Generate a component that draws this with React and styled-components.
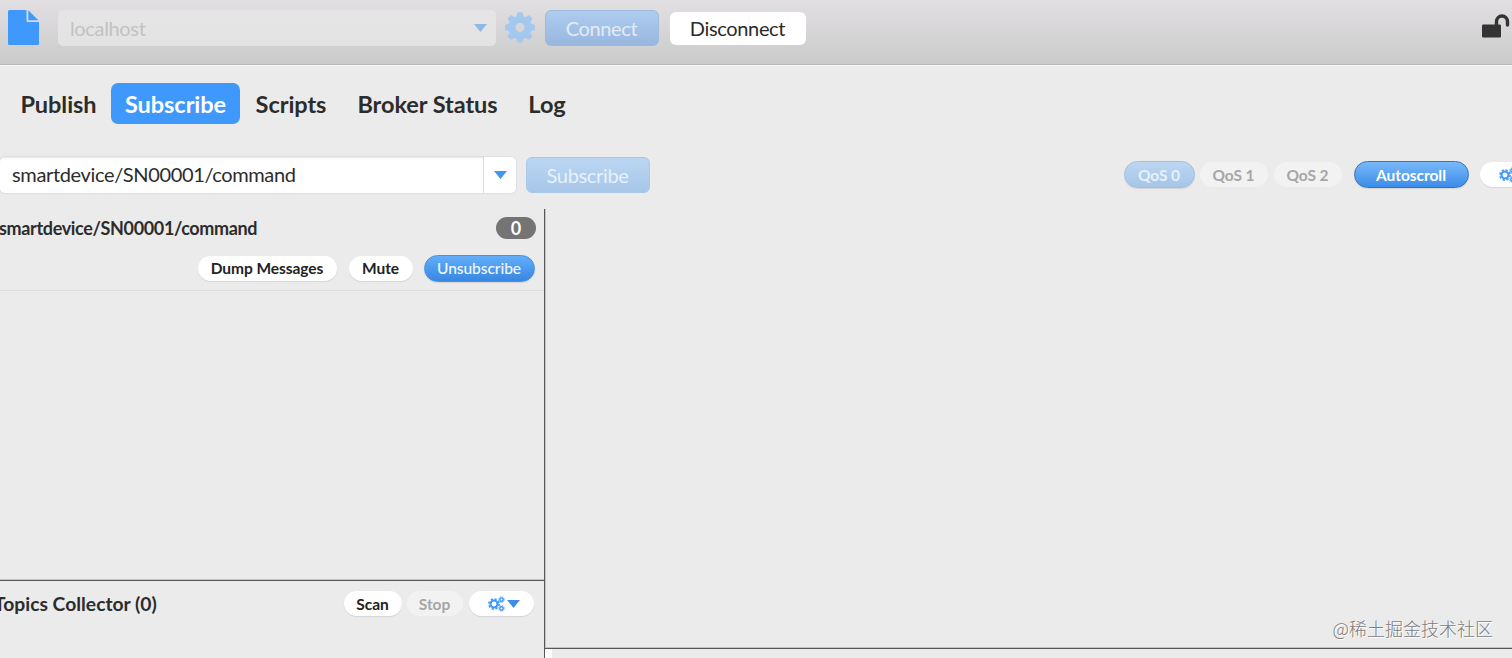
import styled, { createGlobalStyle, css } from "styled-components";

export default function App() {
  return (
    <Window>
      <GlobalStyle />
      <TopBar>
        <FileIcon />
        <BrokerSelect>
          <span>localhost</span>
          <Caret width={13} height={8} color="#8fb9e0" />
        </BrokerSelect>
        <CogIcon />
        <ConnectButton>Connect</ConnectButton>
        <DisconnectButton>Disconnect</DisconnectButton>
        <UnlockIcon />
      </TopBar>

      <Tabs>
        <Tab $width={105}>Publish</Tab>
        <Tab $width={129} $active>
          Subscribe
        </Tab>
        <Tab $width={102}>Scripts</Tab>
        <Tab $width={171}>Broker Status</Tab>
        <Tab $width={68}>Log</Tab>
      </Tabs>

      <SubscribeBar>
        <TopicBox>
          <TopicInput>smartdevice/SN00001/command</TopicInput>
          <TopicToggle>
            <Caret width={13} height={8} color="#3f97f2" />
          </TopicToggle>
        </TopicBox>
        <SubscribeButton>Subscribe</SubscribeButton>
        <Options>
          <Pill $width={71} $variant="fadedBlue">
            QoS 0
          </Pill>
          <Pill $width={68} $variant="disabled" $left={5}>
            QoS 1
          </Pill>
          <Pill $width={68} $variant="disabled" $left={6}>
            QoS 2
          </Pill>
          <Pill $width={115} $variant="toggled" $left={12}>
            Autoscroll
          </Pill>
          <Pill $width={65} $left={11} $menu>
            <CogsIcon />
            <Caret width={13} height={8} color="#3f8ee6" />
          </Pill>
        </Options>
      </SubscribeBar>

      <Panels>
        <Sidebar>
          <Subscriptions>
            <Subscription>
              <TopicRow>
                <TopicName>smartdevice/SN00001/command</TopicName>
                <Badge>0</Badge>
              </TopicRow>
              <ActionRow>
                <Pill $width={139}>Dump Messages</Pill>
                <Pill $width={64} $left={12}>
                  Mute
                </Pill>
                <Pill $width={111} $left={11} $variant="blue">
                  Unsubscribe
                </Pill>
              </ActionRow>
            </Subscription>
          </Subscriptions>
          <Collector>
            <CollectorTitle>Topics Collector (0)</CollectorTitle>
            <Pill $width={58}>Scan</Pill>
            <Pill $width={56} $left={5} $variant="disabled">
              Stop
            </Pill>
            <Pill $width={65} $left={6} $menu>
              <CogsIcon />
              <Caret width={13} height={8} color="#3f8ee6" />
            </Pill>
          </Collector>
        </Sidebar>
        <Messages>
          <MessageList>
            <Watermark>@稀土掘金技术社区</Watermark>
          </MessageList>
          <MessageDetail>
            <DetailGutter />
          </MessageDetail>
        </Messages>
      </Panels>
    </Window>
  );
}

function FileIcon() {
  return (
    <FileSvg width="31" height="35" viewBox="0 0 31 35">
      <path
        fill="#3f99fc"
        d="M1.500 0H18.500V10.500Q18.500 12 20 12H31V33.500Q31 35 29.500 35H1.500Q0 35 0 33.500V1.500Q0 0 1.500 0Z"
      />
      <path fill="#3f99fc" d="M20.300 0.300L30.300 10.300H20.300Z" />
    </FileSvg>
  );
}

// eight square teeth around a ring
function CogIcon() {
  return (
    <CogSvg width="30" height="31" viewBox="-15 -15.500 30 31">
      <circle r="8" fill="none" stroke="#a4c8ee" strokeWidth="7" />
      {[0, 45, 90, 135, 180, 225, 270, 315].map((angle) => (
        <path
          key={angle}
          d="M-3.900 -10L-2.600 -14.600Q-2.400 -15.200 -1.800 -15.200H1.800Q2.400 -15.200 2.600 -14.600L3.900 -10Z"
          transform={`rotate(${angle})`}
          fill="#a4c8ee"
        />
      ))}
    </CogSvg>
  );
}

function CogsIcon() {
  return (
    <svg width="17" height="16" viewBox="0 0 17 16" fill="none" stroke="#3f99f8">
      <circle cx="6" cy="8" r="3.500" strokeWidth="2.100" />
      <circle cx="6" cy="8" r="5.100" strokeWidth="1.600" strokeDasharray="2.200 1.805" />
      <circle cx="13.500" cy="3.600" r="1.700" strokeWidth="1.400" />
      <circle cx="13.500" cy="3.600" r="2.700" strokeWidth="1" strokeDasharray="1.200 0.920" />
      <circle cx="13.500" cy="12.400" r="1.700" strokeWidth="1.400" />
      <circle cx="13.500" cy="12.400" r="2.700" strokeWidth="1" strokeDasharray="1.200 0.920" />
    </svg>
  );
}

function UnlockIcon() {
  return (
    <UnlockSvg width="28" height="24" viewBox="0 0 28 24">
      <rect x="0" y="10.500" width="19" height="13" rx="1.300" fill="#333" />
      <path
        d="M14.500 11V7.500a5.500 5.500 0 0 1 11 0V11"
        fill="none"
        stroke="#333"
        strokeWidth="3.400"
        strokeLinecap="round"
      />
    </UnlockSvg>
  );
}

function Caret({ width, height, color }) {
  return (
    <svg width={width} height={height} viewBox="0 0 12 8" preserveAspectRatio="none">
      <path d="M0 0H12L6 8Z" fill={color} />
    </svg>
  );
}

const GlobalStyle = createGlobalStyle`
  * {
    box-sizing: border-box;
  }

  body {
    margin: 0;
    overflow: hidden;
    background: #ebebeb;
    color: #2c2c2c;
    font-family: Lato, "Noto Sans CJK SC", sans-serif;
  }
`;

const Window = styled.div`
  display: flex;
  flex-direction: column;
  width: 1512px;
  height: 658px;
  overflow: hidden;
  white-space: nowrap;
`;

const TopBar = styled.header`
  display: flex;
  align-items: flex-start;
  flex: none;
  height: 65px;
  padding: 10px 2px 0 8px;
  background: linear-gradient(#e2dfe2, #cbcbcb);
  border-bottom: 1px solid #b8b8b8;
`;

const FileSvg = styled.svg`
  flex: none;
`;

const CogSvg = styled.svg`
  flex: none;
  margin: 2px 10px 0 9px;
`;

const UnlockSvg = styled.svg`
  flex: none;
  margin: 4px 0 0 auto;
`;

const BrokerSelect = styled.div`
  display: flex;
  align-items: center;
  justify-content: space-between;
  width: 438px;
  height: 36px;
  margin-left: 19px;
  padding: 0 9px 0 12px;
  border-radius: 5px;
  background: linear-gradient(#e6e5e6, #e3e3e3);
  color: #c2c2c2;
  font-size: 20px;
  letter-spacing: -0.35px;
`;

const LargeButton = styled.button`
  flex: none;
  height: 36px;
  padding: 0 1px 1px 0;
  border: 0;
  border-radius: 6px;
  font-family: inherit;
  font-size: 20px;
  letter-spacing: -0.35px;
`;

const ConnectButton = styled(LargeButton)`
  width: 114px;
  border: 1px solid #9dbbdf;
  background: linear-gradient(#adccee, #98b7df);
  color: #e3ebf5;
`;

const DisconnectButton = styled(LargeButton)`
  width: 136px;
  height: 33px;
  margin: 2px 0 0 11px;
  padding-bottom: 2px;
  background: #fff;
  color: #2a2a2a;
`;

const Tabs = styled.nav`
  display: flex;
  flex: none;
  height: 76px;
  padding: 17px 0 0 6px;
  border-top: 1px solid #f6f6f6;
`;

const Tab = styled.div`
  display: flex;
  align-items: center;
  justify-content: center;
  width: ${({ $width }) => $width}px;
  height: 41px;
  border-radius: 7px;
  font-size: 23.500px;
  font-weight: 700;
  letter-spacing: -0.05px;
  ${({ $active }) =>
    $active &&
    css`
      background: #3f99fc;
      color: #fff;
    `}
`;

const SubscribeBar = styled.section`
  display: flex;
  align-items: flex-start;
  flex: none;
  height: 68px;
  padding-top: 16px;
`;

const TopicBox = styled.div`
  display: flex;
  flex: none;
  width: 516px;
  height: 36px;
  border-radius: 5px;
  background: #fff;
  box-shadow: 0 0 1px 1px #dedede;
`;

const TopicInput = styled.div`
  flex: 1;
  padding-left: 12px;
  line-height: 35px;
  font-size: 20px;
  letter-spacing: -0.36px;
  box-shadow: inset 0 2px 2px -1px #e5e5e5;
`;

const TopicToggle = styled.div`
  display: flex;
  align-items: center;
  justify-content: center;
  width: 33px;
  border-left: 1px solid #dcdcdc;
`;

const SubscribeButton = styled(LargeButton)`
  width: 124px;
  margin-left: 10px;
  border: 1px solid #a9c9e8;
  background: linear-gradient(#bbd6f3, #a7c7e9);
  color: #e9f1fa;
`;

const Options = styled.div`
  display: flex;
  align-items: center;
  flex: none;
  height: 35px;
  margin-left: 474px;
`;

const pillVariants = {
  blue: css`
    height: 27px;
    border: 1px solid #4790e2;
    background: linear-gradient(#63aefa, #3787e2);
    color: #f3f8ff;
    font-weight: 500;
  `,
  toggled: css`
    height: 27px;
    border: 1px solid #3773b8;
    background: linear-gradient(#7ab9f9, #3b8ce8);
    color: #fff;
  `,
  fadedBlue: css`
    height: 27px;
    border: 1px solid #9fbfdf;
    background: linear-gradient(#bcd6f1, #a5c6e9);
    color: #e8f0fa;
  `,
  disabled: css`
    height: 25px;
    background: #f2f2f2;
    box-shadow: none;
    color: #a6a6a6;
  `,
};

const Pill = styled.button`
  display: flex;
  align-items: center;
  justify-content: center;
  flex: none;
  gap: 2px;
  width: ${({ $width }) => $width}px;
  height: 25px;
  margin-left: ${({ $left = 0 }) => $left}px;
  padding: ${({ $menu }) => ($menu ? "0 0 0 5px" : "0 1px 0 0")};
  border: 0;
  border-radius: 14px;
  background: #fff;
  box-shadow: 0 1px 1px #d4d4d4;
  color: #222;
  font-family: inherit;
  font-size: 15.500px;
  font-weight: 700;
  letter-spacing: -0.05px;
  ${({ $variant }) => pillVariants[$variant]}
`;

const Panels = styled.main`
  display: flex;
  flex: 1;
  min-height: 0;
`;

const Sidebar = styled.aside`
  display: flex;
  flex-direction: column;
  width: 544px;
`;

const Subscriptions = styled.div`
  flex: 1;
`;

const Subscription = styled.div`
  height: 82px;
  padding-right: 8px;
  border-bottom: 1px solid #dedede;
`;

const TopicRow = styled.div`
  display: flex;
  align-items: center;
  justify-content: space-between;
  height: 37px;
`;

const TopicName = styled.div`
  margin-left: -1px;
  font-size: 18px;
  font-weight: 700;
  letter-spacing: -0.35px;
`;

const Badge = styled.div`
  width: 40px;
  height: 22px;
  border-radius: 11px;
  background: #747474;
  color: #fff;
  font-size: 18px;
  font-weight: 700;
  line-height: 22px;
  text-align: center;
`;

const ActionRow = styled.div`
  display: flex;
  align-items: center;
  justify-content: flex-end;
  height: 44px;
  padding-right: 1px;
`;

const Collector = styled.div`
  display: flex;
  align-items: flex-start;
  height: 78px;
  padding: 10px 10px 0 0;
  border-top: 1px solid #585858;
  box-shadow: 0 -1px 0 #c4c4c4;
`;

const CollectorTitle = styled.div`
  flex: 1;
  margin-left: -6px;
  font-size: 19.300px;
  font-weight: 700;
  line-height: 25px;
`;

const Messages = styled.div`
  display: flex;
  flex-direction: column;
  flex: 1;
  border-left: 1px solid #585858;
  box-shadow: inset 1px 0 0 #c4c4c4;
`;

const MessageList = styled.div`
  display: flex;
  align-items: flex-end;
  justify-content: flex-end;
  flex: 1;
  padding: 0 19px 7px 0;
`;

const Watermark = styled.div`
  color: #7c7c7c;
  font-family: "Noto Sans CJK SC", sans-serif;
  font-size: 18px;
  font-weight: 300;
  line-height: 26px;
  text-shadow: 1px 1px 0 #fff;
`;

const MessageDetail = styled.div`
  height: 10px;
  border-top: 1px solid #585858;
  box-shadow: 0 -1px 0 #c4c4c4;
`;

const DetailGutter = styled.div`
  width: 7px;
  height: 9px;
  background: #fff;
`;
